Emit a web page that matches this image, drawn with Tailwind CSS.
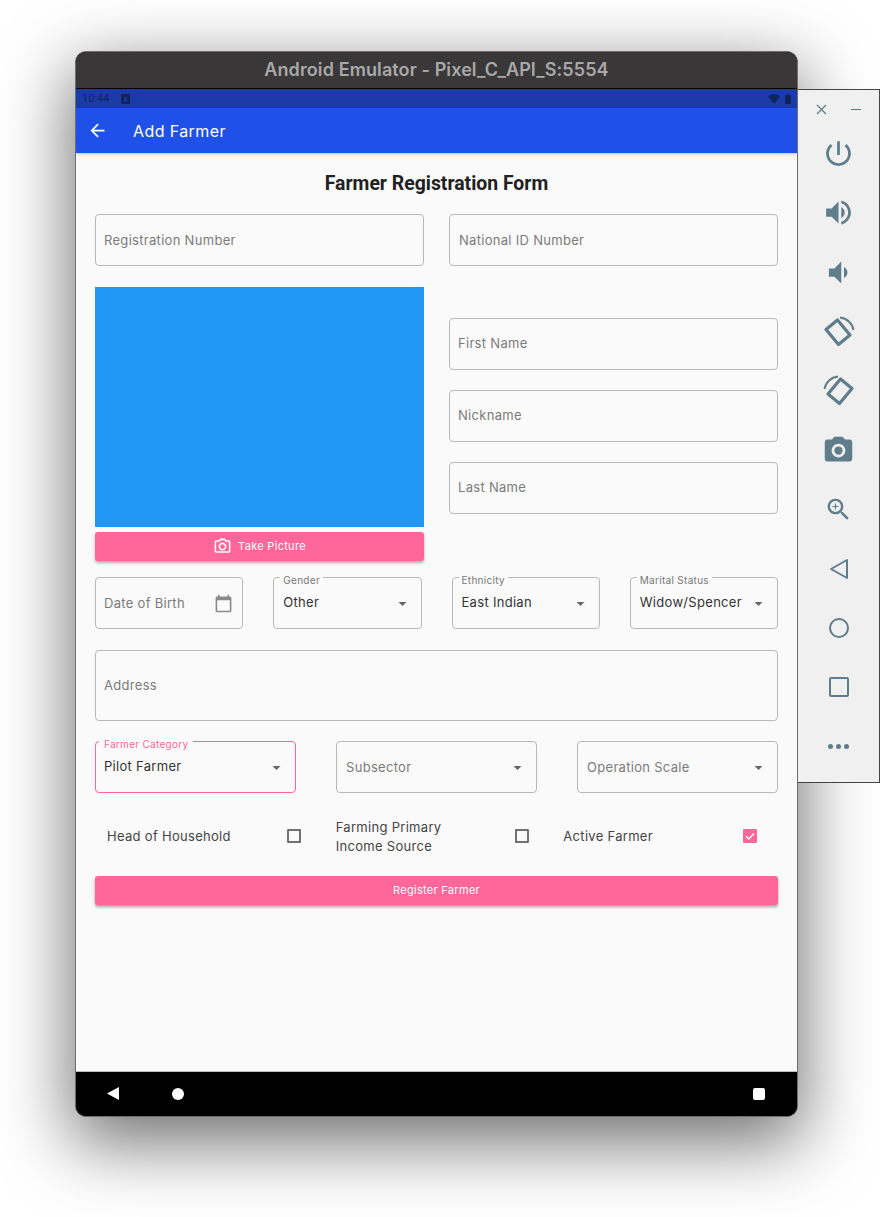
<!DOCTYPE html>
<html lang="en">
<head>
    <meta charset="UTF-8">
    <meta name="viewport" content="width=device-width, initial-scale=1.0">
    <title>Add Farmer</title>
    <script src="https://cdn.jsdelivr.net/npm/@tailwindcss/browser@4"></script>
</head>
<body class="bg-white">
<div class="relative w-[880px] h-[1217px] overflow-hidden bg-white font-['Inter',sans-serif]">

    <!-- Emulator window -->
    <div class="absolute left-[75px] top-[51px] w-[723px] h-[1066px] flex flex-col rounded-[11px] overflow-hidden border border-[#6e6e6e] shadow-[0_22px_70px_4px_rgba(0,0,0,0.56)] bg-black">
        <div class="h-[37px] shrink-0 bg-[#3a3739] border-b border-black flex items-center justify-center pb-[2px] text-[18px] font-semibold tracking-[0.1px] text-[#a9a8a9]">Android Emulator - Pixel_C_API_S:5554</div>

        <!-- Status bar -->
        <div class="h-[19px] shrink-0 bg-[#1a3ba8] flex items-center justify-between pl-[6px] pr-[6px] pt-[1px] text-[#10235f]">
            <div class="flex items-center gap-[12px]">
                <span class="text-[11px] font-['Roboto',sans-serif]">10:44</span>
                <svg class="w-[9px] h-[10px]" viewBox="0 0 9 10" fill="#10235f"><path d="M1 0h7a1 1 0 0 1 1 1v8a1 1 0 0 1-1 1H1a1 1 0 0 1-1-1V1a1 1 0 0 1 1-1zm3.500 2L2.500 8h1l.4-1.200h1.200L5.500 8h1l-2-6z"/></svg>
            </div>
            <div class="flex items-center gap-[5px]">
                <svg class="w-[12px] h-[10px]" viewBox="0 0 12 10" fill="#10235f"><path d="M6 10 0 2.500C1.500 1 3.600 0 6 0s4.500 1 6 2.500z"/></svg>
                <svg class="w-[6px] h-[10px]" viewBox="0 0 6 10" fill="#10235f"><path d="M2 0h2v1h1a1 1 0 0 1 1 1v7a1 1 0 0 1-1 1H1a1 1 0 0 1-1-1V2a1 1 0 0 1 1-1h1z"/></svg>
            </div>
        </div>

        <!-- App bar -->
        <div class="h-[45px] shrink-0 bg-[#1f51e8] flex items-center pl-[11px] text-white shadow-[0_1px_3px_rgba(0,0,0,0.25)] z-10">
            <svg class="w-[21px] h-[21px]" viewBox="0 0 24 24" fill="white"><path d="M20 11H7.830l5.590-5.590L12 4l-8 8 8 8 1.410-1.410L7.830 13H20v-2z"/></svg>
            <span class="ml-[25px] text-[16px] font-normal tracking-[0.4px]">Add Farmer</span>
        </div>

        <!-- Form -->
        <div class="flex-1 bg-[#fafafa] px-[19px] pt-[20px] text-[13px] tracking-[0.3px]">
            <h1 class="h-[22px] leading-[22px] text-center text-[19.400px] font-bold tracking-normal text-[#212121] font-['Roboto',sans-serif]">Farmer Registration Form</h1>

            <div class="grid grid-cols-2 gap-[25px] mt-[19px]">
                <div class="h-[52px] border border-[#b8b8b8] rounded-[4px] flex items-center pl-[8px] pt-[1px] text-[#7a7a7a]">Registration Number</div>
                <div class="h-[52px] border border-[#b8b8b8] rounded-[4px] flex items-center pl-[9px] pt-[1px] text-[#7a7a7a]">National ID Number</div>
            </div>

            <div class="grid grid-cols-2 gap-[25px] mt-[21px]">
                <div>
                    <div class="h-[240px] bg-[#2196f3]"></div>
                    <div class="h-[29px] mt-[5px] bg-[#ff6699] rounded-[3px] shadow-[0_2px_3px_rgba(0,0,0,0.3)] flex items-center justify-center gap-[6px] text-[11px] text-white">
                        <svg class="w-[19px] h-[19px]" viewBox="0 0 24 24" fill="white"><path d="M20 4h-3.170L15 2H9L7.170 4H4c-1.100 0-2 .9-2 2v12c0 1.100.9 2 2 2h16c1.100 0 2-.9 2-2V6c0-1.100-.9-2-2-2zm0 14H4V6h4.050l1.830-2h4.240l1.830 2H20v12zM12 7c-2.760 0-5 2.240-5 5s2.240 5 5 5 5-2.240 5-5-2.240-5-5-5zm0 8c-1.650 0-3-1.350-3-3s1.350-3 3-3 3 1.350 3 3-1.350 3-3 3z"/></svg>
                        Take Picture
                    </div>
                </div>
                <div class="flex flex-col gap-5 pt-[31px]">
                    <div class="h-[52px] border border-[#b8b8b8] rounded-[4px] flex items-center pl-[8px] text-[#7a7a7a]">First Name</div>
                    <div class="h-[52px] border border-[#b8b8b8] rounded-[4px] flex items-center pl-[8px] text-[#7a7a7a]">Nickname</div>
                    <div class="h-[52px] border border-[#b8b8b8] rounded-[4px] flex items-center pl-[8px] text-[#7a7a7a]">Last Name</div>
                </div>
            </div>

            <div class="grid grid-cols-4 gap-[30px] mt-[16px]">
                <div class="h-[52px] border border-[#b8b8b8] rounded-[4px] flex items-center justify-between pl-[8px] pr-[9px] pt-[1px] text-[#7a7a7a]">
                    Date of Birth
                    <svg class="w-[19px] h-[19px]" viewBox="0 0 24 24" fill="#8a8a8a"><path d="M20 3h-1V1h-2v2H7V1H5v2H4c-1.100 0-2 .9-2 2v16c0 1.100.9 2 2 2h16c1.100 0 2-.9 2-2V5c0-1.100-.9-2-2-2zm0 18H4V8h16v13z"/></svg>
                </div>
                <div class="relative h-[52px] border border-[#b8b8b8] rounded-[4px] flex items-center justify-between pl-[9px] pr-[9px] text-[#333]">
                    <span class="absolute left-[6px] -top-[4px] bg-[#fafafa] px-[3px] text-[10px] leading-[12px] text-[#777]">Gender</span>
                    Other
                    <svg class="w-[19px] h-[19px]" viewBox="0 0 24 24" fill="#666"><path d="M7 10l5 5 5-5z"/></svg>
                </div>
                <div class="relative h-[52px] border border-[#b8b8b8] rounded-[4px] flex items-center justify-between pl-[9px] pr-[9px] text-[#333]">
                    <span class="absolute left-[6px] -top-[4px] bg-[#fafafa] px-[3px] text-[10px] leading-[12px] text-[#777]">Ethnicity</span>
                    East Indian
                    <svg class="w-[19px] h-[19px]" viewBox="0 0 24 24" fill="#666"><path d="M7 10l5 5 5-5z"/></svg>
                </div>
                <div class="relative h-[52px] border border-[#b8b8b8] rounded-[4px] flex items-center justify-between pl-[9px] pr-[9px] text-[#333]">
                    <span class="absolute left-[6px] -top-[4px] bg-[#fafafa] px-[3px] text-[10px] leading-[12px] text-[#777]">Marital Status</span>
                    Widow/Spencer
                    <svg class="w-[19px] h-[19px]" viewBox="0 0 24 24" fill="#666"><path d="M7 10l5 5 5-5z"/></svg>
                </div>
            </div>

            <div class="h-[71px] mt-[21px] border border-[#b8b8b8] rounded-[4px] flex items-center pl-[8px] text-[#7a7a7a]">Address</div>

            <div class="grid grid-cols-3 gap-10 mt-[20px]">
                <div class="relative h-[52px] border-[1.500px] border-[#ff6699] rounded-[4px] flex items-center justify-between pl-[8px] pr-[9px] text-[#333]">
                    <span class="absolute left-[3px] -top-[4.500px] bg-[#fafafa] px-[5px] text-[10px] leading-[12px] text-[#ff6699]">Farmer Category</span>
                    Pilot Farmer
                    <svg class="w-[19px] h-[19px]" viewBox="0 0 24 24" fill="#666"><path d="M7 10l5 5 5-5z"/></svg>
                </div>
                <div class="h-[52px] border border-[#b8b8b8] rounded-[4px] flex items-center justify-between pl-[9px] pr-[9px] text-[#7a7a7a]">
                    <span class="pt-[2px]">Subsector</span>
                    <svg class="w-[19px] h-[19px]" viewBox="0 0 24 24" fill="#666"><path d="M7 10l5 5 5-5z"/></svg>
                </div>
                <div class="h-[52px] border border-[#b8b8b8] rounded-[4px] flex items-center justify-between pl-[9px] pr-[9px] text-[#7a7a7a]">
                    <span class="pt-[2px]">Operation Scale</span>
                    <svg class="w-[19px] h-[19px]" viewBox="0 0 24 24" fill="#666"><path d="M7 10l5 5 5-5z"/></svg>
                </div>
            </div>

            <div class="grid grid-cols-3 h-[83px] pt-[2px] text-[#444] leading-[19px]">
                <div class="flex items-center justify-between pl-[12px] pr-[22px]">
                    <span class="pt-[2px]">Head of Household</span>
                    <span class="w-[14px] h-[14px] border-2 border-[#707070] rounded-[1px]"></span>
                </div>
                <div class="flex items-center justify-between pl-[13px] pr-[21px]">
                    <span class="pt-[2px]">Farming Primary<br>Income Source</span>
                    <span class="w-[14px] h-[14px] border-2 border-[#707070] rounded-[1px]"></span>
                </div>
                <div class="flex items-center justify-between pl-[13px] pr-[21px]">
                    <span class="pt-[2px]">Active Farmer</span>
                    <span class="w-[14px] h-[14px] bg-[#ff6699] rounded-[1px] flex items-center justify-center">
                        <svg class="w-[12px] h-[12px]" viewBox="0 0 24 24" fill="none" stroke="white" stroke-width="3"><path d="M4 12.500l5.500 5.500L20 7"/></svg>
                    </span>
                </div>
            </div>

            <div class="h-[29px] bg-[#ff6699] rounded-[3px] shadow-[0_2px_3px_rgba(0,0,0,0.35)] flex items-center justify-center text-[11px] text-white">Register Farmer</div>
        </div>

        <!-- Android nav -->
        <div class="h-[45px] shrink-0 bg-black border-t border-[#bbb] flex items-center justify-between pl-[31px] pr-[32px] pb-[1px]">
            <div class="flex items-center gap-[53px]">
                <svg class="w-[12px] h-[13px]" viewBox="0 0 12 13" fill="white"><path d="M0 6.500 12 0v13z"/></svg>
                <div class="w-[12px] h-[12px] rounded-full bg-white"></div>
            </div>
            <div class="w-[12px] h-[12px] rounded-[2px] bg-white"></div>
        </div>
    </div>

    <!-- Emulator side toolbar -->
    <div class="absolute left-[798px] top-[89px] w-[82px] h-[694px] bg-[#f0f0f0] border border-l-0 border-[#444] flex flex-col items-center text-[#607d8b]">
        <div class="h-[34px] w-full shrink-0 flex items-center justify-between pl-[18px] pr-[18px] pt-[5px]">
            <svg class="w-[11px] h-[11px]" viewBox="0 0 11 11" stroke="#607d8b" stroke-width="1.300"><path d="M1 1l9 9M10 1l-9 9"/></svg>
            <div class="w-[10px] h-[1.500px] bg-[#607d8b]"></div>
        </div>
        <div class="h-[59.300px] flex items-center">
            <svg class="w-[33px] h-[33px]" viewBox="0 0 24 24" fill="#607d8b"><path d="M13 3h-2v10h2V3zm4.830 2.170l-1.420 1.420C17.990 7.860 19 9.810 19 12c0 3.870-3.130 7-7 7s-7-3.130-7-7c0-2.190 1.010-4.140 2.580-5.420L6.170 5.170C4.230 6.820 3 9.260 3 12c0 4.970 4.030 9 9 9s9-4.030 9-9c0-2.740-1.230-5.180-3.170-6.830z"/></svg>
        </div>
        <div class="h-[59.300px] flex items-center">
            <svg class="w-[33px] h-[33px]" viewBox="0 0 24 24" fill="#607d8b"><path d="M3 9v6h4l5 5V4L7 9H3zm13.500 3c0-1.770-1.020-3.290-2.500-4.030v8.050c1.480-.73 2.500-2.250 2.500-4.020zM14 3.230v2.060c2.890.86 5 3.540 5 6.710s-2.110 5.850-5 6.710v2.060c4.010-.91 7-4.490 7-8.770s-2.990-7.860-7-8.770z"/></svg>
        </div>
        <div class="h-[59.300px] flex items-center">
            <svg class="w-[33px] h-[33px]" viewBox="0 0 24 24" fill="#607d8b"><path d="M18.500 12c0-1.770-1.020-3.290-2.500-4.030v8.050c1.480-.73 2.500-2.250 2.500-4.020zM5 9v6h4l5 5V4L9 9H5z"/></svg>
        </div>
        <div class="h-[59.300px] flex items-center">
            <svg class="w-[32px] h-[32px]" viewBox="0 0 32 32" fill="none" stroke="#607d8b"><path stroke-width="3.200" stroke-linejoin="round" d="M3 13.500 14.500 4 27 19 15.500 28.500z"/><path stroke-width="2" d="M17 1.500A15 15 0 0 1 30.500 14"/></svg>
        </div>
        <div class="h-[59.300px] flex items-center">
            <svg class="w-[32px] h-[32px] -scale-x-100" viewBox="0 0 32 32" fill="none" stroke="#607d8b"><path stroke-width="3.200" stroke-linejoin="round" d="M3 13.500 14.500 4 27 19 15.500 28.500z"/><path stroke-width="2" d="M17 1.500A15 15 0 0 1 30.500 14"/></svg>
        </div>
        <div class="h-[59.300px] flex items-center">
            <svg class="w-[33px] h-[33px]" viewBox="0 0 24 24" fill="#607d8b"><circle cx="12" cy="12" r="3"/><path d="M9 2L7.170 4H4c-1.100 0-2 .9-2 2v12c0 1.100.9 2 2 2h16c1.100 0 2-.9 2-2V6c0-1.100-.9-2-2-2h-3.170L15 2H9zm3 15c-2.760 0-5-2.240-5-5s2.240-5 5-5 5 2.240 5 5-2.240 5-5 5z"/></svg>
        </div>
        <div class="h-[59.300px] flex items-center">
            <svg class="w-[29px] h-[29px]" viewBox="0 0 24 24" fill="#607d8b"><path d="M15.500 14h-.79l-.28-.27C15.410 12.590 16 11.110 16 9.500 16 5.910 13.090 3 9.500 3S3 5.910 3 9.500 5.910 16 9.500 16c1.610 0 3.090-.59 4.230-1.570l.27.28v.79l5 4.990L20.490 19l-4.990-5zm-6 0C7.010 14 5 11.990 5 9.500S7.010 5 9.500 5 14 7.010 14 9.500 11.990 14 9.500 14z"/><path d="M12 10h-2v2H9v-2H7V9h2V7h1v2h2v1z"/></svg>
        </div>
        <div class="h-[59.300px] flex items-center">
            <svg class="w-[20px] h-[22px]" viewBox="0 0 20 22" fill="none" stroke="#607d8b" stroke-width="2" stroke-linejoin="round"><path d="M2 11 18 2v18z"/></svg>
        </div>
        <div class="h-[59.300px] flex items-center">
            <div class="w-[20px] h-[20px] rounded-full border-2 border-[#607d8b]"></div>
        </div>
        <div class="h-[59.300px] flex items-center">
            <div class="w-[20px] h-[20px] rounded-[2px] border-2 border-[#607d8b]"></div>
        </div>
        <div class="h-[59.300px] flex items-center gap-[3px]">
            <div class="w-[5px] h-[5px] rounded-full bg-[#607d8b]"></div>
            <div class="w-[5px] h-[5px] rounded-full bg-[#607d8b]"></div>
            <div class="w-[5px] h-[5px] rounded-full bg-[#607d8b]"></div>
        </div>
    </div>
</div>
</body>
</html>
